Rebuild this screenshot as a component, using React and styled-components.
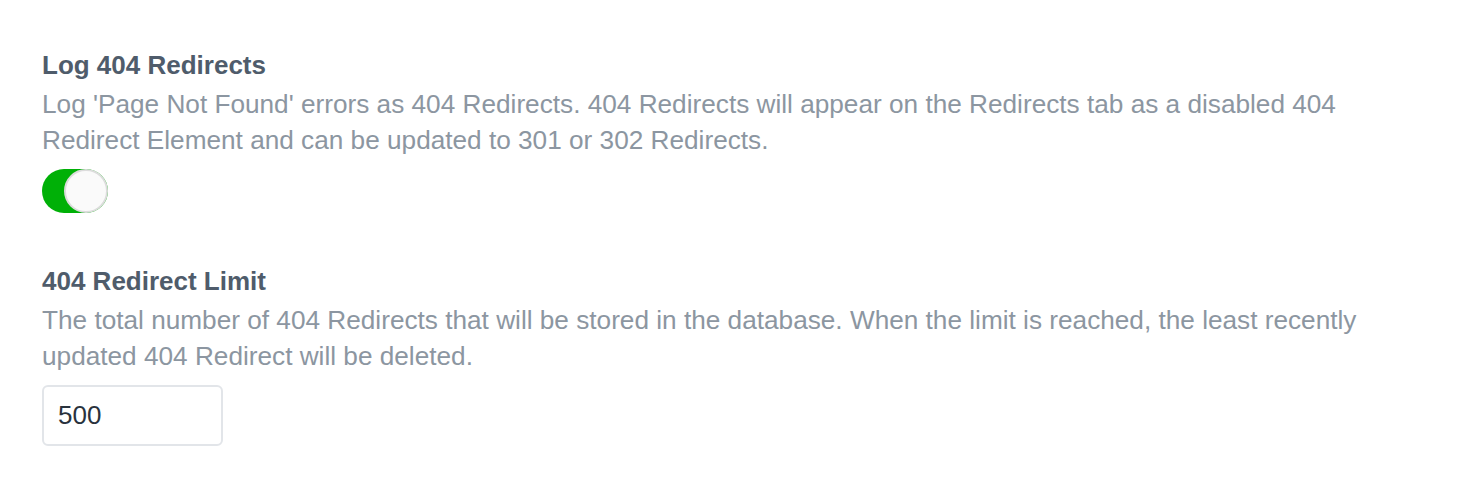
import React, { useState } from 'react';
import styled, { createGlobalStyle } from 'styled-components';

const GlobalStyle = createGlobalStyle`
  body {
    margin: 0;
    background: #ffffff;
    font-family: "Liberation Sans", Arial, Helvetica, sans-serif;
  }
`;

const Page = styled.div`
  padding: 50px 42px 0;
  width: 1335px;
`;

const Field = styled.div`
  display: flex;
  flex-direction: column;
  align-items: flex-start;
  margin-bottom: 53px;
`;

const Heading = styled.h2`
  margin: 0;
  font-size: 26px;
  line-height: 30px;
  font-weight: 700;
  color: #4f5c6b;
`;

const Instructions = styled.p`
  margin: 6px 0 0;
  font-size: 26.2px;
  line-height: 36px;
  color: #8c96a1;
`;

const Toggle = styled.button`
  position: relative;
  margin-top: 11px;
  width: 66px;
  height: 44px;
  padding: 0;
  border: none;
  border-radius: 22px;
  background: ${({ $on }) => ($on ? '#00b007' : '#e4e7ea')};
  cursor: pointer;
`;

const Knob = styled.span`
  position: absolute;
  top: 0;
  left: ${({ $on }) => ($on ? '22px' : '0')};
  width: 44px;
  height: 44px;
  box-sizing: border-box;
  border-radius: 50%;
  background: #fafafa;
  border: 2px solid #dcdcdc;
`;

const Input = styled.input`
  margin-top: 11px;
  box-sizing: border-box;
  width: 181px;
  height: 61px;
  padding: 0 14px;
  border: 2px solid #e2e5e9;
  border-radius: 6px;
  font-family: inherit;
  font-size: 26px;
  color: #29323d;
  outline: none;
`;

export default function App() {
  const [on, setOn] = useState(true);
  const [limit, setLimit] = useState('500');

  return (
    <Page>
      <GlobalStyle />
      <Field>
        <Heading>Log 404 Redirects</Heading>
        <Instructions>
          Log 'Page Not Found' errors as 404 Redirects. 404 Redirects will appear on the Redirects tab as a disabled 404
          Redirect Element and can be updated to 301 or 302 Redirects.
        </Instructions>
        <Toggle $on={on} onClick={() => setOn(!on)}>
          <Knob $on={on} />
        </Toggle>
      </Field>
      <Field>
        <Heading>404 Redirect Limit</Heading>
        <Instructions>
          The total number of 404 Redirects that will be stored in the database. When the limit is reached, the least recently
          updated 404 Redirect will be deleted.
        </Instructions>
        <Input value={limit} onChange={(e) => setLimit(e.target.value)} />
      </Field>
    </Page>
  );
}
